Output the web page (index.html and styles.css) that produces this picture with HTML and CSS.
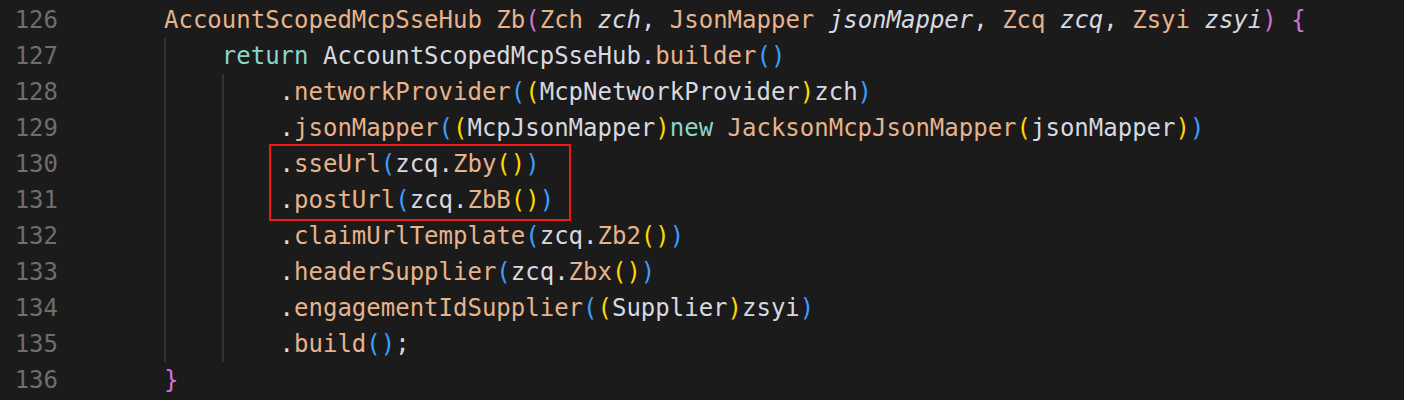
FILE: index.html
```html
<!DOCTYPE html>
<html>
<head>
<meta charset="utf-8">
<link rel="stylesheet" href="styles.css">
</head>
<body>
<div class="editor">
  <div class="line"><span class="ln">126</span><span class="code"><span class="t">AccountScopedMcpSseHub</span> <span class="t">Zb</span><span class="bp">(</span><span class="t">Zch</span> <span class="i">zch</span>, <span class="t">JsonMapper</span> <span class="i">jsonMapper</span>, <span class="t">Zcq</span> <span class="i">zcq</span>, <span class="t">Zsyi</span> <span class="i">zsyi</span><span class="bp">)</span> <span class="bp">{</span></span></div>
  <div class="line"><span class="ln">127</span><span class="code"><span class="ind"></span><span class="k">return</span> AccountScopedMcpSseHub.<span class="t">builder</span><span class="bb">()</span></span></div>
  <div class="line"><span class="ln">128</span><span class="code"><span class="ind"></span><span class="ind"></span>.<span class="t">networkProvider</span><span class="bb">(</span><span class="by">(</span>McpNetworkProvider<span class="by">)</span>zch<span class="bb">)</span></span></div>
  <div class="line"><span class="ln">129</span><span class="code"><span class="ind"></span><span class="ind"></span>.<span class="t">jsonMapper</span><span class="bb">(</span><span class="by">(</span>McpJsonMapper<span class="by">)</span><span class="k">new</span> <span class="t">JacksonMcpJsonMapper</span><span class="by">(</span>jsonMapper<span class="by">)</span><span class="bb">)</span></span></div>
  <div class="line"><span class="ln">130</span><span class="code"><span class="ind"></span><span class="ind"></span>.<span class="t">sseUrl</span><span class="bb">(</span>zcq.<span class="t">Zby</span><span class="by">()</span><span class="bb">)</span></span></div>
  <div class="line"><span class="ln">131</span><span class="code"><span class="ind"></span><span class="ind"></span>.<span class="t">postUrl</span><span class="bb">(</span>zcq.<span class="t">ZbB</span><span class="by">()</span><span class="bb">)</span></span></div>
  <div class="line"><span class="ln">132</span><span class="code"><span class="ind"></span><span class="ind"></span>.<span class="t">claimUrlTemplate</span><span class="bb">(</span>zcq.<span class="t">Zb2</span><span class="by">()</span><span class="bb">)</span></span></div>
  <div class="line"><span class="ln">133</span><span class="code"><span class="ind"></span><span class="ind"></span>.<span class="t">headerSupplier</span><span class="bb">(</span>zcq.<span class="t">Zbx</span><span class="by">()</span><span class="bb">)</span></span></div>
  <div class="line"><span class="ln">134</span><span class="code"><span class="ind"></span><span class="ind"></span>.<span class="t">engagementIdSupplier</span><span class="bb">(</span><span class="by">(</span>Supplier<span class="by">)</span>zsyi<span class="bb">)</span></span></div>
  <div class="line"><span class="ln">135</span><span class="code"><span class="ind"></span><span class="ind"></span>.<span class="t">build</span><span class="bb">()</span>;</span></div>
  <div class="line"><span class="ln">136</span><span class="code"><span class="bp">}</span></span></div>
  <div class="highlight"></div>
</div>
</body>
</html>
```
FILE: styles.css
```css
html, body {
  margin: 0;
  padding: 0;
  background: #1b1b1b;
}
.editor {
  position: relative;
  padding-top: 2px;
  font-family: "DejaVu Sans Mono", "Liberation Mono", monospace;
  font-size: 24px;
  color: #d8d9e0;
  height: 398px;
}
.line {
  display: flex;
  height: 36px;
  line-height: 36px;
  white-space: pre;
}
.ln {
  width: 58px;
  text-align: right;
  color: #6e6e6e;
  margin-right: 106px;
  flex: none;
}
.code {
  display: block;
  white-space: pre;
}
.ind {
  display: inline-block;
  vertical-align: top;
  width: 4ch;
  height: 36px;
  box-shadow: inset 2px 0 0 #333333;
}
.t { color: #e6b38b; }
.k { color: #8cd3cb; }
.i { font-style: italic; }
.bp { color: #d670d6; }
.by { color: #ffd700; }
.bb { color: #3d9eff; }
.highlight {
  position: absolute;
  left: 269px;
  top: 144px;
  width: 298px;
  height: 73px;
  border: 2px solid #f01818;
}
```
